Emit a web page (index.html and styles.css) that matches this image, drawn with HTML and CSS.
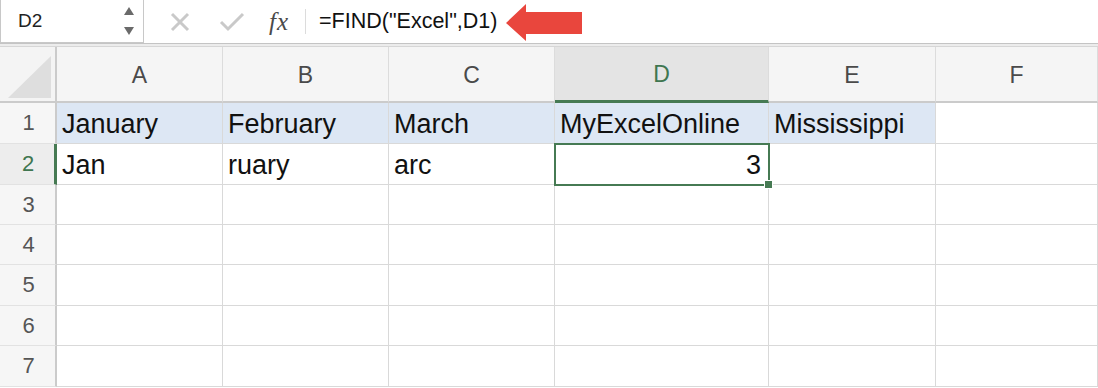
FILE: index.html
```html
<!DOCTYPE html>
<html lang="en">
<head>
    <meta charset="UTF-8">
    <title>FIND function - Excel</title>
    <link rel="stylesheet" href="styles.css">
</head>
<body>
    <div class="formula-bar">
        <div class="name-box">
            <span class="cell-ref">D2</span>
            <span class="spinner">
                <svg width="12" height="30" viewBox="0 0 12 30"><path d="M1 9 L6 1 L11 9 Z M1 21 L11 21 L6 29 Z" fill="#6a6a6a"/></svg>
            </span>
        </div>
        <div class="bar-buttons">
            <svg class="btn-cancel" width="20" height="20" viewBox="0 0 20 20"><path d="M2 2 L18 18 M18 2 L2 18" stroke="#c9c9c9" stroke-width="3" fill="none"/></svg>
            <svg class="btn-enter" width="26" height="20" viewBox="0 0 26 20"><path d="M2 10 L9 17 L24 2" stroke="#c9c9c9" stroke-width="3" fill="none"/></svg>
            <span class="fx">fx</span>
        </div>
        <div class="divider"></div>
        <div class="formula">=FIND("Excel",D1)</div>
        <svg class="arrow" width="76" height="37" viewBox="0 0 76 37"><path d="M0 19 L20 0 L20 8 L76 8 L76 30 L20 30 L20 37 Z" fill="#e9463d"/></svg>
    </div>
    <div class="bar-edge"></div>

    <div class="sheet">
        <div class="corner"><span class="corner-tri"></span></div>
        <div class="col-head">A</div>
        <div class="col-head">B</div>
        <div class="col-head">C</div>
        <div class="col-head active">D</div>
        <div class="col-head">E</div>
        <div class="col-head">F</div>

        <div class="row-head">1</div>
        <div class="cell fill">January</div>
        <div class="cell fill">February</div>
        <div class="cell fill">March</div>
        <div class="cell fill">MyExcelOnline</div>
        <div class="cell fill">Mississippi</div>
        <div class="cell"></div>

        <div class="row-head active">2</div>
        <div class="cell">Jan</div>
        <div class="cell">ruary</div>
        <div class="cell">arc</div>
        <div class="cell num selected">3<span class="handle"></span></div>
        <div class="cell"></div>
        <div class="cell"></div>

        <div class="row-head">3</div>
        <div class="cell"></div><div class="cell"></div><div class="cell"></div><div class="cell"></div><div class="cell"></div><div class="cell"></div>
        <div class="row-head">4</div>
        <div class="cell"></div><div class="cell"></div><div class="cell"></div><div class="cell"></div><div class="cell"></div><div class="cell"></div>
        <div class="row-head">5</div>
        <div class="cell"></div><div class="cell"></div><div class="cell"></div><div class="cell"></div><div class="cell"></div><div class="cell"></div>
        <div class="row-head">6</div>
        <div class="cell"></div><div class="cell"></div><div class="cell"></div><div class="cell"></div><div class="cell"></div><div class="cell"></div>
        <div class="row-head">7</div>
        <div class="cell"></div><div class="cell"></div><div class="cell"></div><div class="cell"></div><div class="cell"></div><div class="cell"></div>
    </div>
</body>
</html>
```

FILE: styles.css
```css
body {
    margin: 0;
    font-family: 'Liberation Sans', Arial, sans-serif;
    background: #fff;
    width: 1098px;
    height: 388px;
    overflow: hidden;
}
.formula-bar {
    height: 43px;
    display: flex;
    align-items: center;
    background: #fff;
}
.name-box {
    box-sizing: border-box;
    width: 144px;
    height: 43px;
    border: 1px solid #c8c8c8;
    border-top: none;
    display: flex;
    align-items: center;
    justify-content: space-between;
    padding: 0 8px 0 17px;
}
.cell-ref {
    font-size: 19px;
    color: #222;
}
.spinner svg {
    display: block;
}
.bar-buttons {
    display: flex;
    align-items: center;
    padding-left: 26px;
}
.btn-cancel {
    margin-right: 29px;
}
.btn-enter {
    margin-right: 24px;
}
.fx {
    font-family: 'Liberation Serif', 'Times New Roman', serif;
    font-style: italic;
    font-size: 25px;
    color: #4a4a4a;
    letter-spacing: 1px;
}
.divider {
    width: 1px;
    height: 25px;
    background: #dcdcdc;
    margin: 0 13px 0 16px;
}
.formula {
    font-size: 21.5px;
    color: #111;
    margin-right: 9px;
}
.arrow {
    display: block;
    margin-top: 2px;
}
.bar-edge {
    height: 2px;
    border-top: 1px solid #c4c4c4;
    border-bottom: 1px solid #d6d6d6;
    background: #ececec;
}
.sheet {
    display: grid;
    grid-template-columns: 57px 166px 166px 166px 214px 167px 1fr;
    grid-template-rows: 56px 41px 41px 40px 40px 41px 40px 41px;
}
.sheet > div {
    box-sizing: border-box;
}
.corner {
    background: #f4f4f4;
    border-right: 2px solid #cbcbcb;
    border-bottom: 2px solid #cbcbcb;
    position: relative;
}
.corner-tri {
    position: absolute;
    right: 4px;
    bottom: 3px;
    width: 0;
    height: 0;
    border-left: 43px solid transparent;
    border-bottom: 42px solid #dedede;
}
.col-head {
    background: #f5f5f5;
    border-right: 1px solid #dcdcdc;
    border-bottom: 2px solid #cbcbcb;
    display: flex;
    align-items: center;
    justify-content: center;
    font-size: 23px;
    color: #4a4a4a;
    padding-top: 2px;
}
.col-head.active {
    background: #e4e4e4;
    color: #3f7650;
    border-bottom: 3px solid #467a53;
}
.row-head {
    background: #f6f6f6;
    border-right: 2px solid #cbcbcb;
    border-bottom: 1px solid #e2e2e2;
    display: flex;
    align-items: center;
    justify-content: center;
    font-size: 22px;
    color: #555;
    padding-left: 2px;
}
.row-head.active {
    color: #3f7650;
    border-right: 3px solid #467a53;
    background: #ededed;
}
.cell {
    border-right: 1px solid #d9d9d9;
    border-bottom: 1px solid #d9d9d9;
    font-size: 27px;
    line-height: 40px;
    color: #111;
    padding: 1px 0 0 5px;
    white-space: nowrap;
    overflow: hidden;
}
.cell.fill {
    background: #dde7f4;
}
.cell.num {
    text-align: right;
    padding-right: 7px;
}
.cell.selected {
    position: relative;
    overflow: visible;
    outline: 2px solid #467a53;
    outline-offset: -1px;
}
.handle {
    position: absolute;
    right: -5px;
    bottom: -5px;
    width: 7px;
    height: 7px;
    background: #467a53;
    border: 1px solid #fff;
}
```
